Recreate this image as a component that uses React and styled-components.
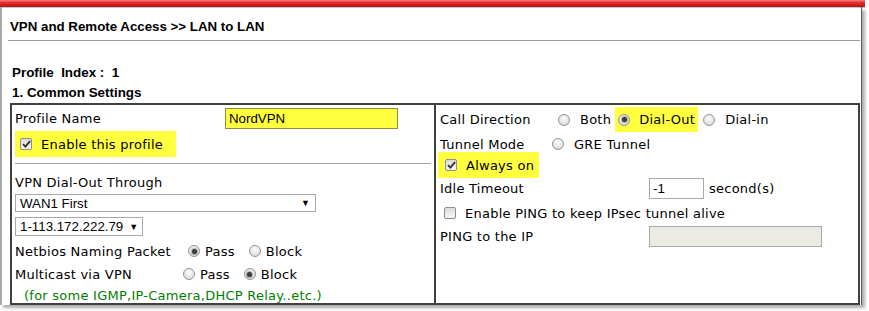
import React from "react";
import styled, { createGlobalStyle } from "styled-components";

const GlobalStyle = createGlobalStyle`
  html, body {
    margin: 0;
    padding: 0;
    background: #fff;
  }
  body {
    font-family: "DejaVu Sans", Verdana, sans-serif;
  }
`;

const Screen = styled.div`
  width: 869px;
  height: 311px;
  overflow: hidden;
  background: #fff;
  display: flex;
  flex-direction: column;
`;

const TopBar = styled.div`
  width: 865px;
  height: 7px;
  flex-shrink: 0;
  background: linear-gradient(to bottom, #f48080 0%, #e83232 35%, #d41818 70%, #a42020 100%);
  box-shadow: 0 1px 0 #c4c4c4;
`;

const Page = styled.div`
  box-sizing: border-box;
  width: 862px;
  height: 298px;
  border-left: 2px solid #a8a8a8;
  border-right: 1px solid #5c5c5c;
  box-shadow: 3px 3px 3px rgba(0, 0, 0, 0.32);
  display: flex;
  flex-direction: column;
`;

const Title = styled.div`
  margin: 12px 0 0 8px;
  font: bold 13.3px/15px "Liberation Sans", Arial, sans-serif;
  color: #000;
`;

const Rule = styled.div`
  margin: 6px 0 0 6px;
  width: 852px;
  height: 1px;
  background: #9a9a9a;
`;

const Heading = styled.div`
  margin: ${(p) => p.$mt}px 0 0 10px;
  font: bold 13.4px/15px "Liberation Sans", Arial, sans-serif;
  color: #000;
`;

const Table = styled.div`
  box-sizing: border-box;
  margin: 3px 0 0 8px;
  width: 850px;
  height: 202px;
  border: 2px solid #404040;
  display: flex;
`;

const Cell = styled.div`
  box-sizing: border-box;
  width: ${(p) => p.$w};
  padding-left: ${(p) => p.$pl}px;
  border-right: ${(p) => (p.$divider ? "2px solid #404040" : "none")};
  display: flex;
  flex-direction: column;
  font-size: 13px;
  letter-spacing: 0.25px;
  color: #000;
`;

const Row = styled.div`
  display: flex;
  align-items: center;
  height: ${(p) => p.$h}px;
  margin-top: ${(p) => p.$mt}px;
  margin-left: ${(p) => p.$ml || 0}px;
  white-space: nowrap;
`;

const Label = styled.span`
  width: ${(p) => p.$w}px;
  flex-shrink: 0;
  line-height: 1;
`;

const Mark = styled.span`
  display: inline-flex;
  align-items: center;
  background: #ffff40;
  height: ${(p) => p.$h}px;
  width: ${(p) => p.$w}px;
  padding-left: ${(p) => p.$pl}px;
  margin-left: ${(p) => p.$ml || 0}px;
  box-sizing: border-box;
  flex-shrink: 0;
`;

const TextInput = styled.div`
  box-sizing: border-box;
  width: ${(p) => p.$w}px;
  height: 21px;
  padding-left: 3px;
  border: 1px solid ${(p) => (p.$yellow ? "#8c8c3c" : "#a9a9a9")};
  background: ${(p) => (p.$yellow ? "#ffff40" : p.$disabled ? "#ebebe4" : "#fff")};
  font: 13.3px/19px "Liberation Sans", Arial, sans-serif;
  letter-spacing: 0;
  color: #000;
`;

const Select = styled.div`
  box-sizing: border-box;
  width: ${(p) => p.$w}px;
  height: ${(p) => p.$h}px;
  padding: 0 5px 0 4px;
  border: 1px solid #a9a9a9;
  display: flex;
  align-items: center;
  justify-content: ${(p) => (p.$tight ? "flex-start" : "space-between")};
  gap: 6px;
  font: 13.3px "Liberation Sans", Arial, sans-serif;
  letter-spacing: 0;
  color: #000;
  span:last-child {
    font-size: 9px;
  }
`;

const Divider = styled.div`
  margin-top: 6px;
  width: 416px;
  height: 1px;
  background: #a4a4a4;
`;

const Box = styled.span`
  box-sizing: border-box;
  width: 12px;
  height: 12px;
  border: 1px solid #8f8f8f;
  border-radius: 2px;
  background: linear-gradient(to bottom, #dcdcdc, #f7f7f7);
  display: inline-flex;
  align-items: center;
  justify-content: center;
  flex-shrink: 0;
  svg {
    display: block;
  }
`;

const Dot = styled.span`
  box-sizing: border-box;
  width: 12px;
  height: 12px;
  border: 1px solid #959595;
  border-radius: 50%;
  background: radial-gradient(circle at 50% 35%, #fcfcfc, #d4d4d4);
  display: inline-flex;
  align-items: center;
  justify-content: center;
  flex-shrink: 0;
  &::after {
    content: "";
    width: 5px;
    height: 5px;
    border-radius: 50%;
    background: ${(p) => (p.$on ? "#3a3a3a" : "transparent")};
    box-shadow: ${(p) => (p.$on ? "0 0 1px 1px rgba(90,90,90,0.45)" : "none")};
  }
`;

const Opt = styled.span`
  display: inline-flex;
  align-items: center;
  gap: ${(p) => p.$gap}px;
  margin-left: ${(p) => p.$ml || 0}px;
  line-height: 1;
`;

const Note = styled.div`
  margin-top: 4px;
  height: 16px;
  padding-left: 9px;
  display: flex;
  align-items: center;
  color: #008000;
  white-space: nowrap;
`;

const Check = ({ on }) => (
  <Box>
    {on && (
      <svg width="9" height="8" viewBox="0 0 9 8">
        <path d="M1 4.2 L3.4 6.6 L8 1.2" fill="none" stroke="#333" strokeWidth="1.9" />
      </svg>
    )}
  </Box>
);

const Radio = ({ on, gap, ml, children }) => (
  <Opt $gap={gap} $ml={ml}>
    <Dot $on={on} />
    <span>{children}</span>
  </Opt>
);

export default function App() {
  return (
    <>
      <GlobalStyle />
      <Screen>
        <TopBar />
        <Page>
          <Title>VPN and Remote Access &gt;&gt; LAN to LAN</Title>
          <Rule />
          <Heading $mt={24}>Profile{"\u00a0"} Index : {"\u00a0"}1</Heading>
          <Heading $mt={5}>1. Common Settings</Heading>
          <Table>
            <Cell $w="424px" $pl={3} $divider>
              <Row $h={22} $mt={2}>
                <Label $w={210}>Profile Name</Label>
                <TextInput $w={173} $yellow>NordVPN</TextInput>
              </Row>
              <Row $h={26} $mt={2}>
                <Mark $h={26} $w={161} $pl={5}>
                  <Opt $gap={9}>
                    <Check on />
                    <span>Enable this profile</span>
                  </Opt>
                </Mark>
              </Row>
              <Divider />
              <Row $h={16} $mt={10}>
                <Label>VPN Dial-Out Through</Label>
              </Row>
              <Row $h={18} $mt={4}>
                <Select $w={301} $h={18}>
                  <span>WAN1 First</span>
                  <span>▼</span>
                </Select>
              </Row>
              <Row $h={19} $mt={5}>
                <Select $w={128} $h={19} $tight>
                  <span>1-113.172.222.79</span>
                  <span>▼</span>
                </Select>
              </Row>
              <Row $h={18} $mt={6}>
                <Label $w={173}>Netbios Naming Packet</Label>
                <Radio on gap={5}>Pass</Radio>
                <Radio gap={5} ml={14}>Block</Radio>
              </Row>
              <Row $h={18} $mt={5}>
                <Label $w={168}>Multicast via VPN</Label>
                <Radio gap={5}>Pass</Radio>
                <Radio on gap={5} ml={14}>Block</Radio>
              </Row>
              <Note>(for some IGMP,IP-Camera,DHCP Relay..etc.)</Note>
            </Cell>
            <Cell $w="421px" $pl={4}>
              <Row $h={25} $mt={2}>
                <Label $w={118}>Call Direction</Label>
                <Radio gap={10}>Both</Radio>
                <Mark $h={25} $w={83} $pl={3} $ml={4}>
                  <Radio on gap={9}>Dial-Out</Radio>
                </Mark>
                <Radio gap={10} ml={5}>Dial-in</Radio>
              </Row>
              <Row $h={16} $mt={4}>
                <Label $w={112}>Tunnel Mode</Label>
                <Radio gap={10}>GRE Tunnel</Radio>
              </Row>
              <Row $h={26} $mt={0} $ml={-2}>
                <Mark $h={26} $w={101} $pl={7}>
                  <Opt $gap={9}>
                    <Check on />
                    <span>Always on</span>
                  </Opt>
                </Mark>
              </Row>
              <Row $h={21} $mt={0}>
                <Label $w={209}>Idle Timeout</Label>
                <TextInput $w={55}>-1</TextInput>
                <Opt $ml={5}>second(s)</Opt>
              </Row>
              <Row $h={20} $mt={4} $ml={4}>
                <Opt $gap={9}>
                  <Check />
                  <span>Enable PING to keep IPsec tunnel alive</span>
                </Opt>
              </Row>
              <Row $h={21} $mt={3}>
                <Label $w={209}>PING to the IP</Label>
                <TextInput $w={173} $disabled />
              </Row>
            </Cell>
          </Table>
        </Page>
      </Screen>
    </>
  );
}
